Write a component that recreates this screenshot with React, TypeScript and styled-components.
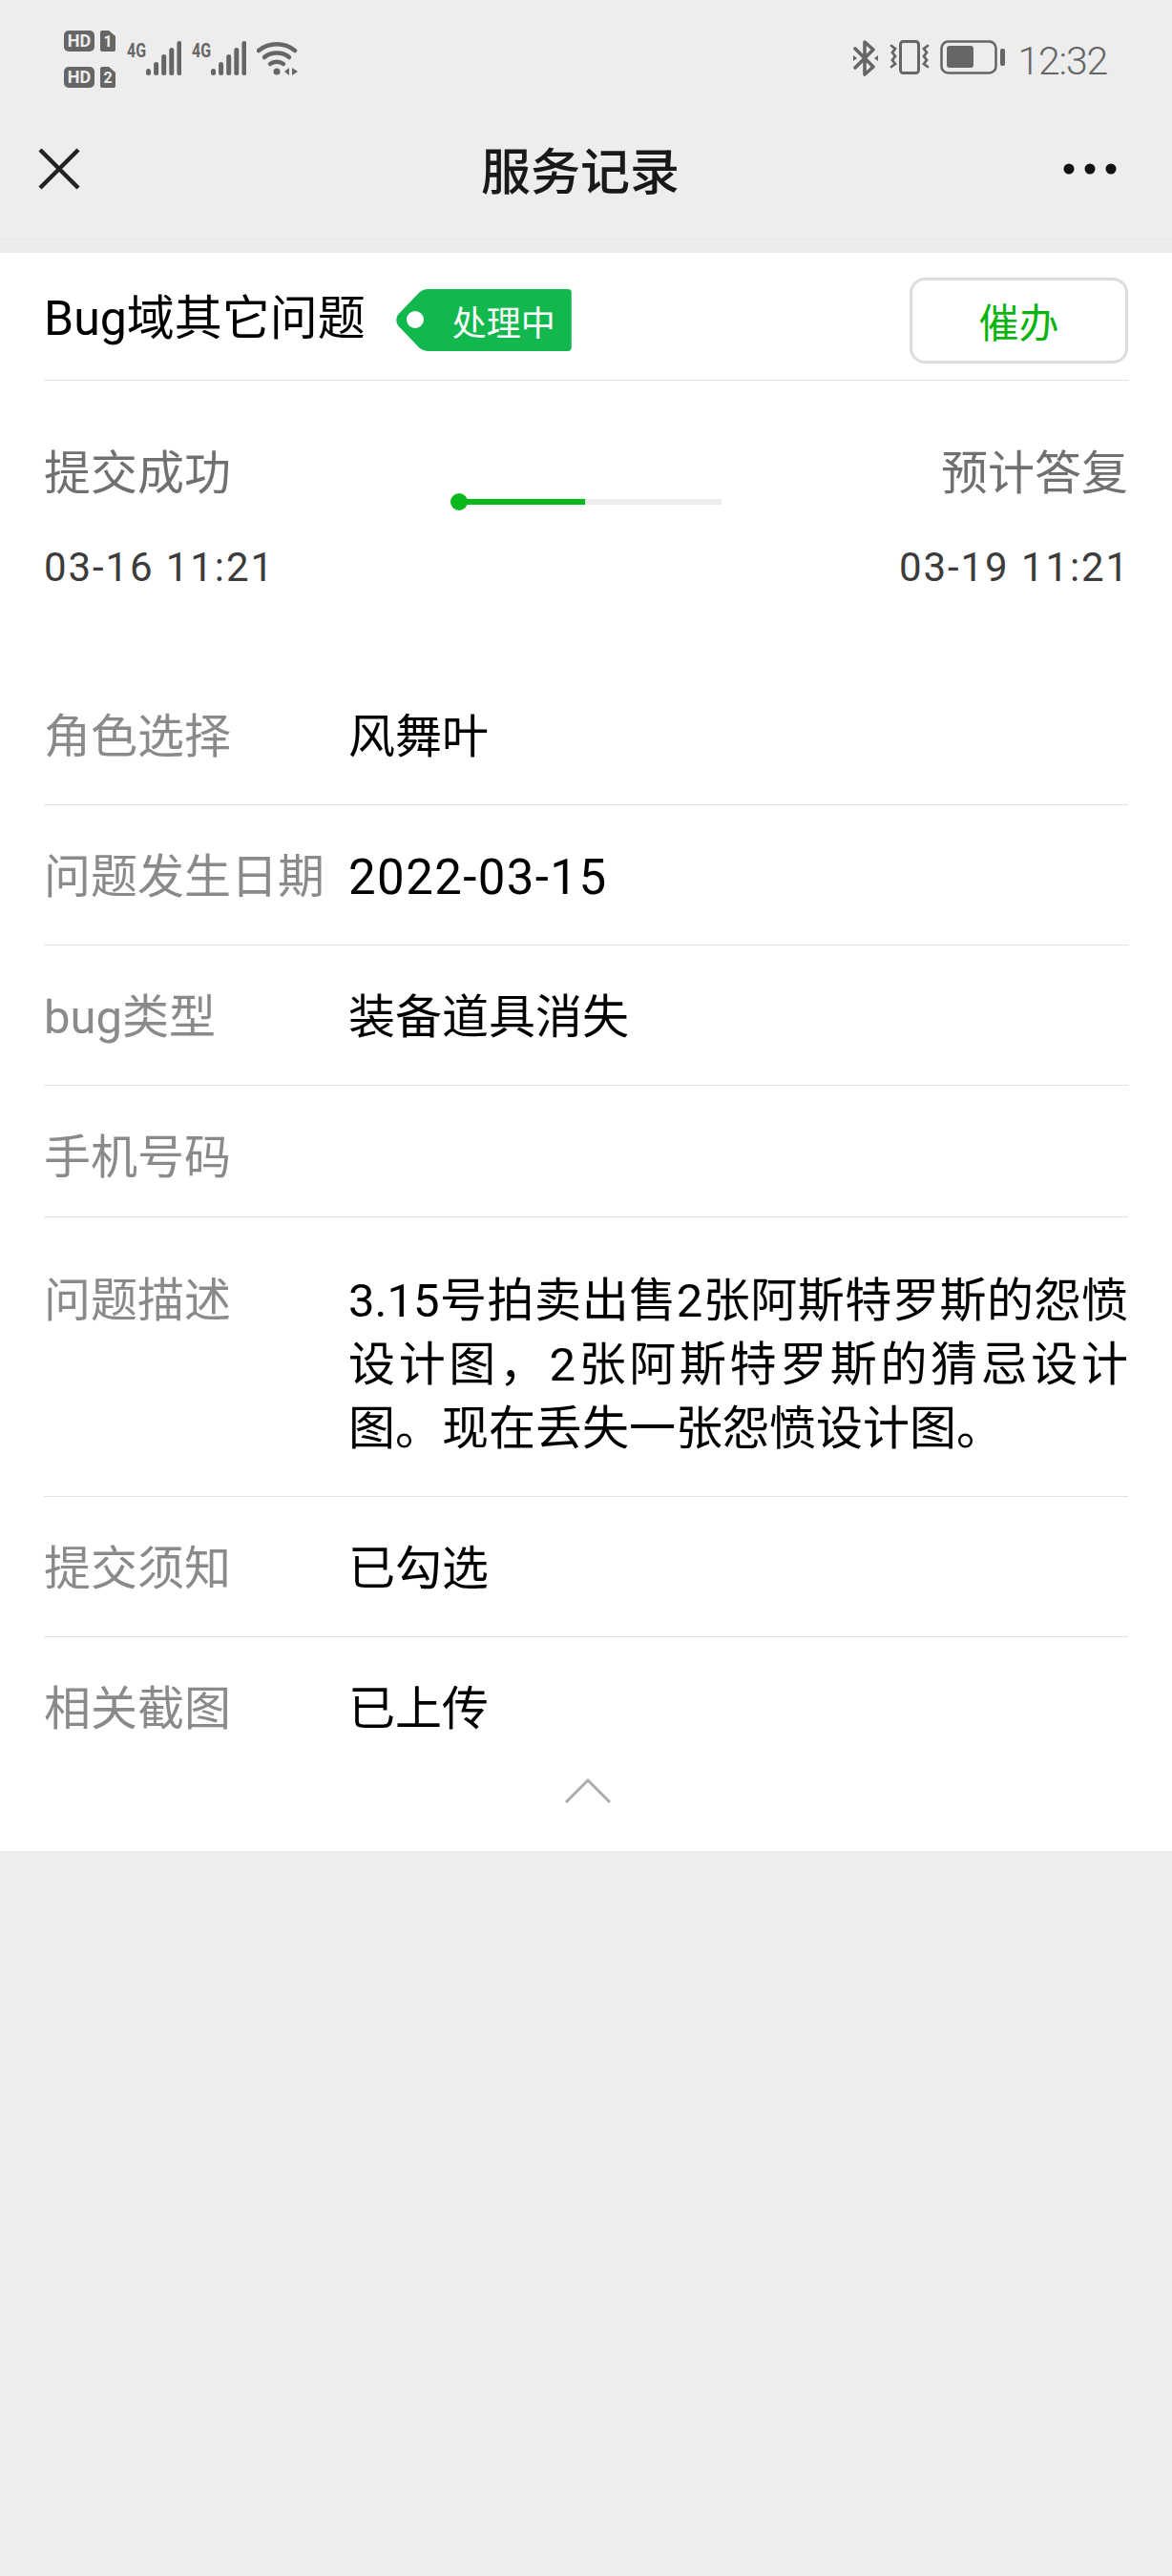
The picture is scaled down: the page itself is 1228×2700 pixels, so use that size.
import styled, { createGlobalStyle } from 'styled-components';

const GlobalStyle = createGlobalStyle`
  html, body {
    margin: 0;
    padding: 0;
    background: #ededed;
  }
  body {
    font-family: "Roboto", "Noto Sans CJK SC", sans-serif;
  }
`;

const Page = styled.div`
  width: 1228px;
  height: 2700px;
  background: #ededed;
  overflow: hidden;
`;

const StatusBar = styled.div`
  height: 124px;
  display: flex;
  justify-content: space-between;
  align-items: flex-start;
  padding: 32px 68px 0 67px;
  box-sizing: border-box;
`;

const StatusLeft = styled.div`
  display: flex;
  align-items: flex-start;
  gap: 11px;
`;

const SignalGroup = styled.div`
  display: flex;
  align-items: flex-start;
  gap: 11px;
  margin-top: 7px;
`;

const StatusRight = styled.div`
  display: flex;
  align-items: flex-start;
  gap: 11px;
  margin-top: 10px;
`;

const Clock = styled.span`
  font-size: 41px;
  line-height: 44px;
  font-weight: 300;
  letter-spacing: -1.2px;
  margin-left: 2px;
  color: #666;
`;

const NavBar = styled.div`
  height: 127px;
  display: flex;
  align-items: center;
  justify-content: space-between;
  padding: 0 58px 21px 40px;
  box-sizing: border-box;
  border-bottom: 1px solid #e6e6e6;
`;

const NavTitle = styled.div`
  font-size: 52px;
  font-weight: 500;
  color: #191919;
  margin-left: 18px;
`;

const Gap = styled.div`
  height: 14px;
  background: #ececec;
`;

const Card = styled.div`
  background: #fff;
  padding: 0 46px;
  display: flex;
  flex-direction: column;
`;

const Header = styled.div`
  height: 134px;
  display: flex;
  align-items: center;
  padding-top: 8px;
  box-sizing: border-box;
  border-bottom: 1px solid #e2e2e2;
`;

const HeaderTitle = styled.div`
  font-size: 50px;
  line-height: 60px;
  margin-top: -3px;
  color: #000;
  margin-right: 31px;
`;

const Tag = styled.div`
  width: 185px;
  height: 65px;
  padding-left: 60px;
  box-sizing: border-box;
  color: #fff;
  font-size: 36px;
  background: #12b84e;
  clip-path: path('M34 0H181Q185 0 185 4V61Q185 65 181 65H34Q30 65 26 62L3 38Q0 32.5 3 27L26 3Q30 0 34 0Z');
  display: flex;
  align-items: center;
  position: relative;
  &::before {
    content: '';
    position: absolute;
    left: 12px;
    top: 23px;
    width: 18px;
    height: 18px;
    border-radius: 50%;
    background: #fff;
  }
`;

const UrgeButton = styled.button`
  margin-left: auto;
  width: 229px;
  height: 90px;
  border: 3px solid #dcdcdc;
  border-radius: 16px;
  background: #fff;
  color: #09b40f;
  font-size: 42px;
  font-family: inherit;
  padding: 0;
`;

const Progress = styled.div`
  display: grid;
  grid-template-columns: 435px 275px 1fr;
  padding-top: 64px;
  height: 298px;
  box-sizing: border-box;
`;

const StepColumn = styled.div<{ $right?: boolean }>`
  display: flex;
  flex-direction: column;
  gap: 39px;
  text-align: ${(p) => (p.$right ? 'right' : 'left')};
`;

const StepName = styled.div`
  font-size: 49px;
  line-height: 68px;
  color: #707070;
`;

const StepTime = styled.div`
  font-size: 42px;
  line-height: 50px;
  letter-spacing: 1.9px;
  margin-right: -2px;
  color: #3c3c3c;
`;

const Track = styled.div`
  height: 6px;
  background: #ececec;
  position: relative;
  margin-top: 60px;
`;

const TrackFill = styled.div`
  height: 100%;
  background: #09b81a;
  position: relative;
  &::before {
    content: '';
    position: absolute;
    left: -9px;
    top: -6px;
    width: 18px;
    height: 18px;
    border-radius: 50%;
    background: #09b81a;
  }
`;

const Row = styled.div<{ $top?: number; $bottom?: number; $last?: boolean }>`
  display: grid;
  grid-template-columns: 319px 1fr;
  align-items: start;
  padding: ${(p) => p.$top ?? 42}px 0 ${(p) => p.$bottom ?? 36}px;
  border-bottom: ${(p) => (p.$last ? 'none' : '1px solid #e2e2e2')};
`;

const RowLabel = styled.div`
  font-size: 49px;
  line-height: 68px;
  color: #8a8a8a;
`;

const RowValue = styled.div`
  font-size: 49px;
  line-height: 68px;
  color: #000;
`;

const DateValue = styled(RowValue)`
  font-size: 51px;
  letter-spacing: 1.4px;
`;

const Paragraph = styled(RowValue)`
  line-height: 67px;
  text-align: justify;
`;

const Fold = styled.div`
  display: flex;
  justify-content: center;
  padding: 37px 0 49px 3px;
`;

function SimBadge({ n, y }: { n: string; y: number }) {
  return (
    <>
      <rect x="0" y={y} width="32" height="22" rx="5" fill="#666" />
      <text x="16" y={y + 17} fontSize="18" fontWeight="700" fill="#ededed" textAnchor="middle" fontFamily="Roboto, sans-serif">HD</text>
      <path d={`M40 ${y}h7l7 6v14a2 2 0 0 1-2 2H40a2 2 0 0 1-2-2V${y + 2}a2 2 0 0 1 2-2z`} fill="#666" />
      <text x="46" y={y + 17} fontSize="16" fontWeight="700" fill="#ededed" textAnchor="middle" fontFamily="Roboto, sans-serif">{n}</text>
    </>
  );
}

function Signal() {
  const bars = [29, 22, 14, 7, 0];
  return (
    <svg width="57" height="40" viewBox="0 -4 57 40">
      <text x="0" y="17" fontSize="21" fontWeight="700" fill="#666" fontFamily="Roboto, sans-serif" textLength="20" lengthAdjust="spacingAndGlyphs">4G</text>
      {bars.map((top, i) => (
        <rect key={i} x={20 + i * 8.1} y={top} width="5" height={36 - top} rx="2.5" fill="#666" />
      ))}
    </svg>
  );
}

function Wifi() {
  return (
    <svg width="44" height="42" viewBox="0 -4 44 42" fill="none" stroke="#666" strokeLinecap="round">
      <path d="M2 10C13 1 29 1 40 10" strokeWidth="4.5" />
      <path d="M8 17C15 11 27 11 34 17" strokeWidth="4.5" />
      <path d="M14 24C18 21 24 21 28 24" strokeWidth="4.5" />
      <circle cx="21" cy="32" r="3.5" fill="#666" stroke="none" />
      <path d="M34 28v8l-5-4zM37 28v8l6-4z" fill="#666" stroke="none" />
    </svg>
  );
}

function Bluetooth() {
  return (
    <svg width="28" height="38" viewBox="0 0 28 38" fill="none" stroke="#666" strokeWidth="3.6" strokeLinejoin="round" strokeLinecap="round">
      <path d="M3 9L22 28L13 36V2L22 10L3 29" />
      <path d="M1 16l4 3-4 3zM27 16l-4 3 4 3z" fill="#666" stroke="none" />
    </svg>
  );
}

function Vibrate() {
  return (
    <svg width="42" height="36" viewBox="0 0 42 36" fill="none" stroke="#666" strokeLinecap="round">
      <rect x="11.5" y="1.5" width="19" height="33" rx="3" strokeWidth="3" />
      <path d="M2 6l4 3-3 4 3 4-3 4 3 4-4 3" strokeWidth="2.8" />
      <path d="M40 6l-4 3 3 4-3 4 3 4-3 4 4 3" strokeWidth="2.8" />
    </svg>
  );
}

function Battery() {
  return (
    <svg width="68" height="36" viewBox="0 0 68 36">
      <rect x="1.5" y="1.5" width="57" height="33" rx="7" fill="none" stroke="#666" strokeWidth="2.6" />
      <rect x="7" y="6" width="28" height="23" rx="3" fill="#666" />
      <rect x="63" y="9" width="5" height="18" rx="2" fill="#666" />
    </svg>
  );
}

export default function App() {
  return (
    <Page>
      <GlobalStyle />
      <StatusBar>
        <StatusLeft>
          <svg width="55" height="60" viewBox="0 0 55 60">
            <SimBadge n="1" y={0} />
            <SimBadge n="2" y={38} />
          </svg>
          <SignalGroup>
            <Signal />
            <Signal />
            <Wifi />
          </SignalGroup>
        </StatusLeft>
        <StatusRight>
          <Bluetooth />
          <Vibrate />
          <Battery />
          <Clock>12:32</Clock>
        </StatusRight>
      </StatusBar>
      <NavBar>
        <svg width="44" height="44" viewBox="0 0 44 44" stroke="#222" strokeWidth="4.5">
          <path d="M2 2L42 42M42 2L2 42" />
        </svg>
        <NavTitle>服务记录</NavTitle>
        <svg width="56" height="12" viewBox="0 0 56 12" fill="#111">
          <circle cx="6" cy="6" r="5.5" />
          <circle cx="28" cy="6" r="5.5" />
          <circle cx="50" cy="6" r="5.5" />
        </svg>
      </NavBar>
      <Gap />
      <Card>
        <Header>
          <HeaderTitle>Bug域其它问题</HeaderTitle>
          <Tag>处理中</Tag>
          <UrgeButton>催办</UrgeButton>
        </Header>
        <Progress>
          <StepColumn>
            <StepName>提交成功</StepName>
            <StepTime>03-16 11:21</StepTime>
          </StepColumn>
          <Track>
            <TrackFill style={{ width: '48%' }} />
          </Track>
          <StepColumn $right>
            <StepName>预计答复</StepName>
            <StepTime>03-19 11:21</StepTime>
          </StepColumn>
        </Progress>
        <Row><RowLabel>角色选择</RowLabel><RowValue>风舞叶</RowValue></Row>
        <Row><RowLabel>问题发生日期</RowLabel><DateValue>2022-03-15</DateValue></Row>
        <Row><RowLabel>bug类型</RowLabel><RowValue>装备道具消失</RowValue></Row>
        <Row $bottom={27}><RowLabel>手机号码</RowLabel><RowValue /></Row>
        <Row $top={54} $bottom={37}>
          <RowLabel>问题描述</RowLabel>
          <Paragraph>3.15号拍卖出售2张阿斯特罗斯的怨愤设计图，2张阿斯特罗斯的猜忌设计图。现在丢失一张怨愤设计图。</Paragraph>
        </Row>
        <Row><RowLabel>提交须知</RowLabel><RowValue>已勾选</RowValue></Row>
        <Row $bottom={0} $last><RowLabel>相关截图</RowLabel><RowValue>已上传</RowValue></Row>
        <Fold>
          <svg width="50" height="28" viewBox="0 0 50 28" fill="none" stroke="#ababab" strokeWidth="3">
            <path d="M2 26L25 3L48 26" />
          </svg>
        </Fold>
      </Card>
    </Page>
  );
}
